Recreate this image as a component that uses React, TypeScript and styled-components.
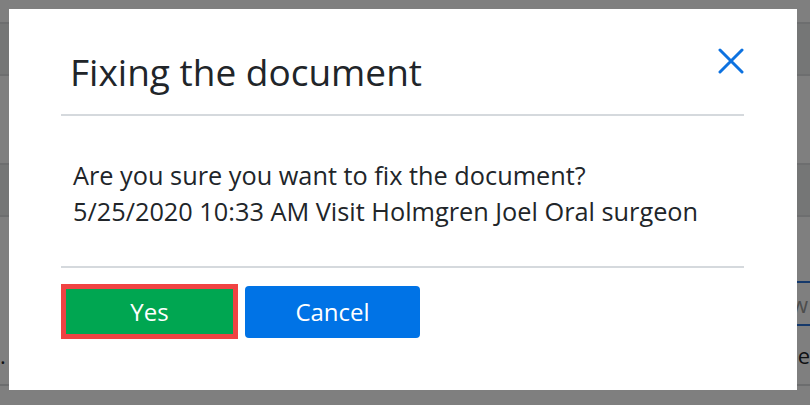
import React from 'react';
import styled, { createGlobalStyle } from 'styled-components';

const GlobalStyle = createGlobalStyle`
  html, body {
    margin: 0;
    padding: 0;
    width: 810px;
    height: 405px;
    overflow: hidden;
    background: #ffffff;
    font-family: "Open Sans", "Noto Sans", Arial, sans-serif;
  }
`;

// page that sits behind the dialog backdrop
const Page = styled.div`
  display: flex;
  flex-direction: column;
  width: 810px;
  height: 405px;
  color: #212529;
`;

const PageRow = styled.div<{ $h: number; $shaded?: boolean }>`
  display: flex;
  align-items: center;
  justify-content: space-between;
  height: ${(p) => p.$h}px;
  box-sizing: border-box;
  background: ${(p) => (p.$shaded ? '#eaeced' : '#ffffff')};
  border-top: ${(p) => (p.$shaded ? '2px solid #dadcdf' : 'none')};
  border-bottom: ${(p) => (p.$shaded ? '2px solid #dadcdf' : 'none')};
  font-size: 20px;
`;

const SearchBox = styled.div`
  margin-left: auto;
  width: 120px;
  height: 45px;
  box-sizing: border-box;
  border-top: 2px solid #2b73d6;
  border-bottom: 2px solid #2b73d6;
  display: flex;
  align-items: center;
  justify-content: flex-end;
  color: #9a9a9a;
  font-size: 22px;
  padding-right: 2px;
`;

const RowText = styled.span`
  font-size: 22px;
  white-space: nowrap;
`;

const FootLine = styled.div`
  border-top: 2px solid #d8dadd;
`;

const Backdrop = styled.div`
  position: fixed;
  inset: 0;
  background: rgba(0, 0, 0, 0.5);
  display: flex;
  padding: 9px 13px 15px 9px;
`;

const Dialog = styled.div`
  flex: 1;
  background: #ffffff;
  padding: 0 53px 0 52px;
  display: flex;
  flex-direction: column;
`;

const Header = styled.div`
  display: flex;
  justify-content: space-between;
  align-items: flex-start;
  padding: 39px 0 20px 9px;
  border-bottom: 2px solid #d5d9dd;
`;

const Title = styled.h2`
  margin: 2px 0 0;
  font-size: 37px;
  font-weight: 400;
  line-height: 1.2;
  color: #212529;
`;

const CloseButton = styled.button`
  border: none;
  background: none;
  padding: 0;
  width: 26px;
  height: 26px;
  cursor: pointer;
  display: block;
`;

const Body = styled.div`
  padding: 41px 0 37px 12px;
  font-size: 25.3px;
  line-height: 36px;
  color: #212529;
  border-bottom: 2px solid #d5d9dd;
`;

const Footer = styled.div`
  display: flex;
  align-items: center;
  gap: 7px;
  padding-top: 16px;
`;

const ActionButton = styled.button<{ $tone: 'confirm' | 'cancel' }>`
  box-sizing: border-box;
  font-family: inherit;
  font-size: 24px;
  color: #ffffff;
  cursor: pointer;
  display: flex;
  align-items: center;
  justify-content: center;
  width: ${(p) => (p.$tone === 'confirm' ? 177 : 175)}px;
  height: ${(p) => (p.$tone === 'confirm' ? 55 : 52)}px;
  background: ${(p) => (p.$tone === 'confirm' ? '#00a651' : '#0073e6')};
  border: ${(p) => (p.$tone === 'confirm' ? '5px solid #f04343' : 'none')};
  border-radius: ${(p) => (p.$tone === 'confirm' ? 0 : 4)}px;
`;

const CloseIcon = () => (
  <svg width="26" height="26" viewBox="0 0 26 26">
    <path d="M2 2 L24 24 M24 2 L2 24" stroke="#0d72e0" strokeWidth="3" strokeLinecap="round" />
  </svg>
);

export default function App() {
  return (
    <>
      <GlobalStyle />
      <Page>
        <PageRow $h={22} />
        <PageRow $h={54} $shaded />
        <PageRow $h={87} />
        <PageRow $h={54} $shaded />
        <PageRow $h={64} />
        <PageRow $h={45}>
          <SearchBox>New</SearchBox>
        </PageRow>
        <PageRow $h={58}>
          <RowText>.</RowText>
          <RowText>Revie</RowText>
        </PageRow>
        <FootLine />
      </Page>
      <Backdrop>
        <Dialog>
          <Header>
            <Title>Fixing the document</Title>
            <CloseButton aria-label="Close">
              <CloseIcon />
            </CloseButton>
          </Header>
          <Body>
            Are you sure you want to fix the document?
            <br />
            5/25/2020 10:33 AM Visit Holmgren Joel Oral surgeon
          </Body>
          <Footer>
            <ActionButton $tone="confirm">Yes</ActionButton>
            <ActionButton $tone="cancel">Cancel</ActionButton>
          </Footer>
        </Dialog>
      </Backdrop>
    </>
  );
}
